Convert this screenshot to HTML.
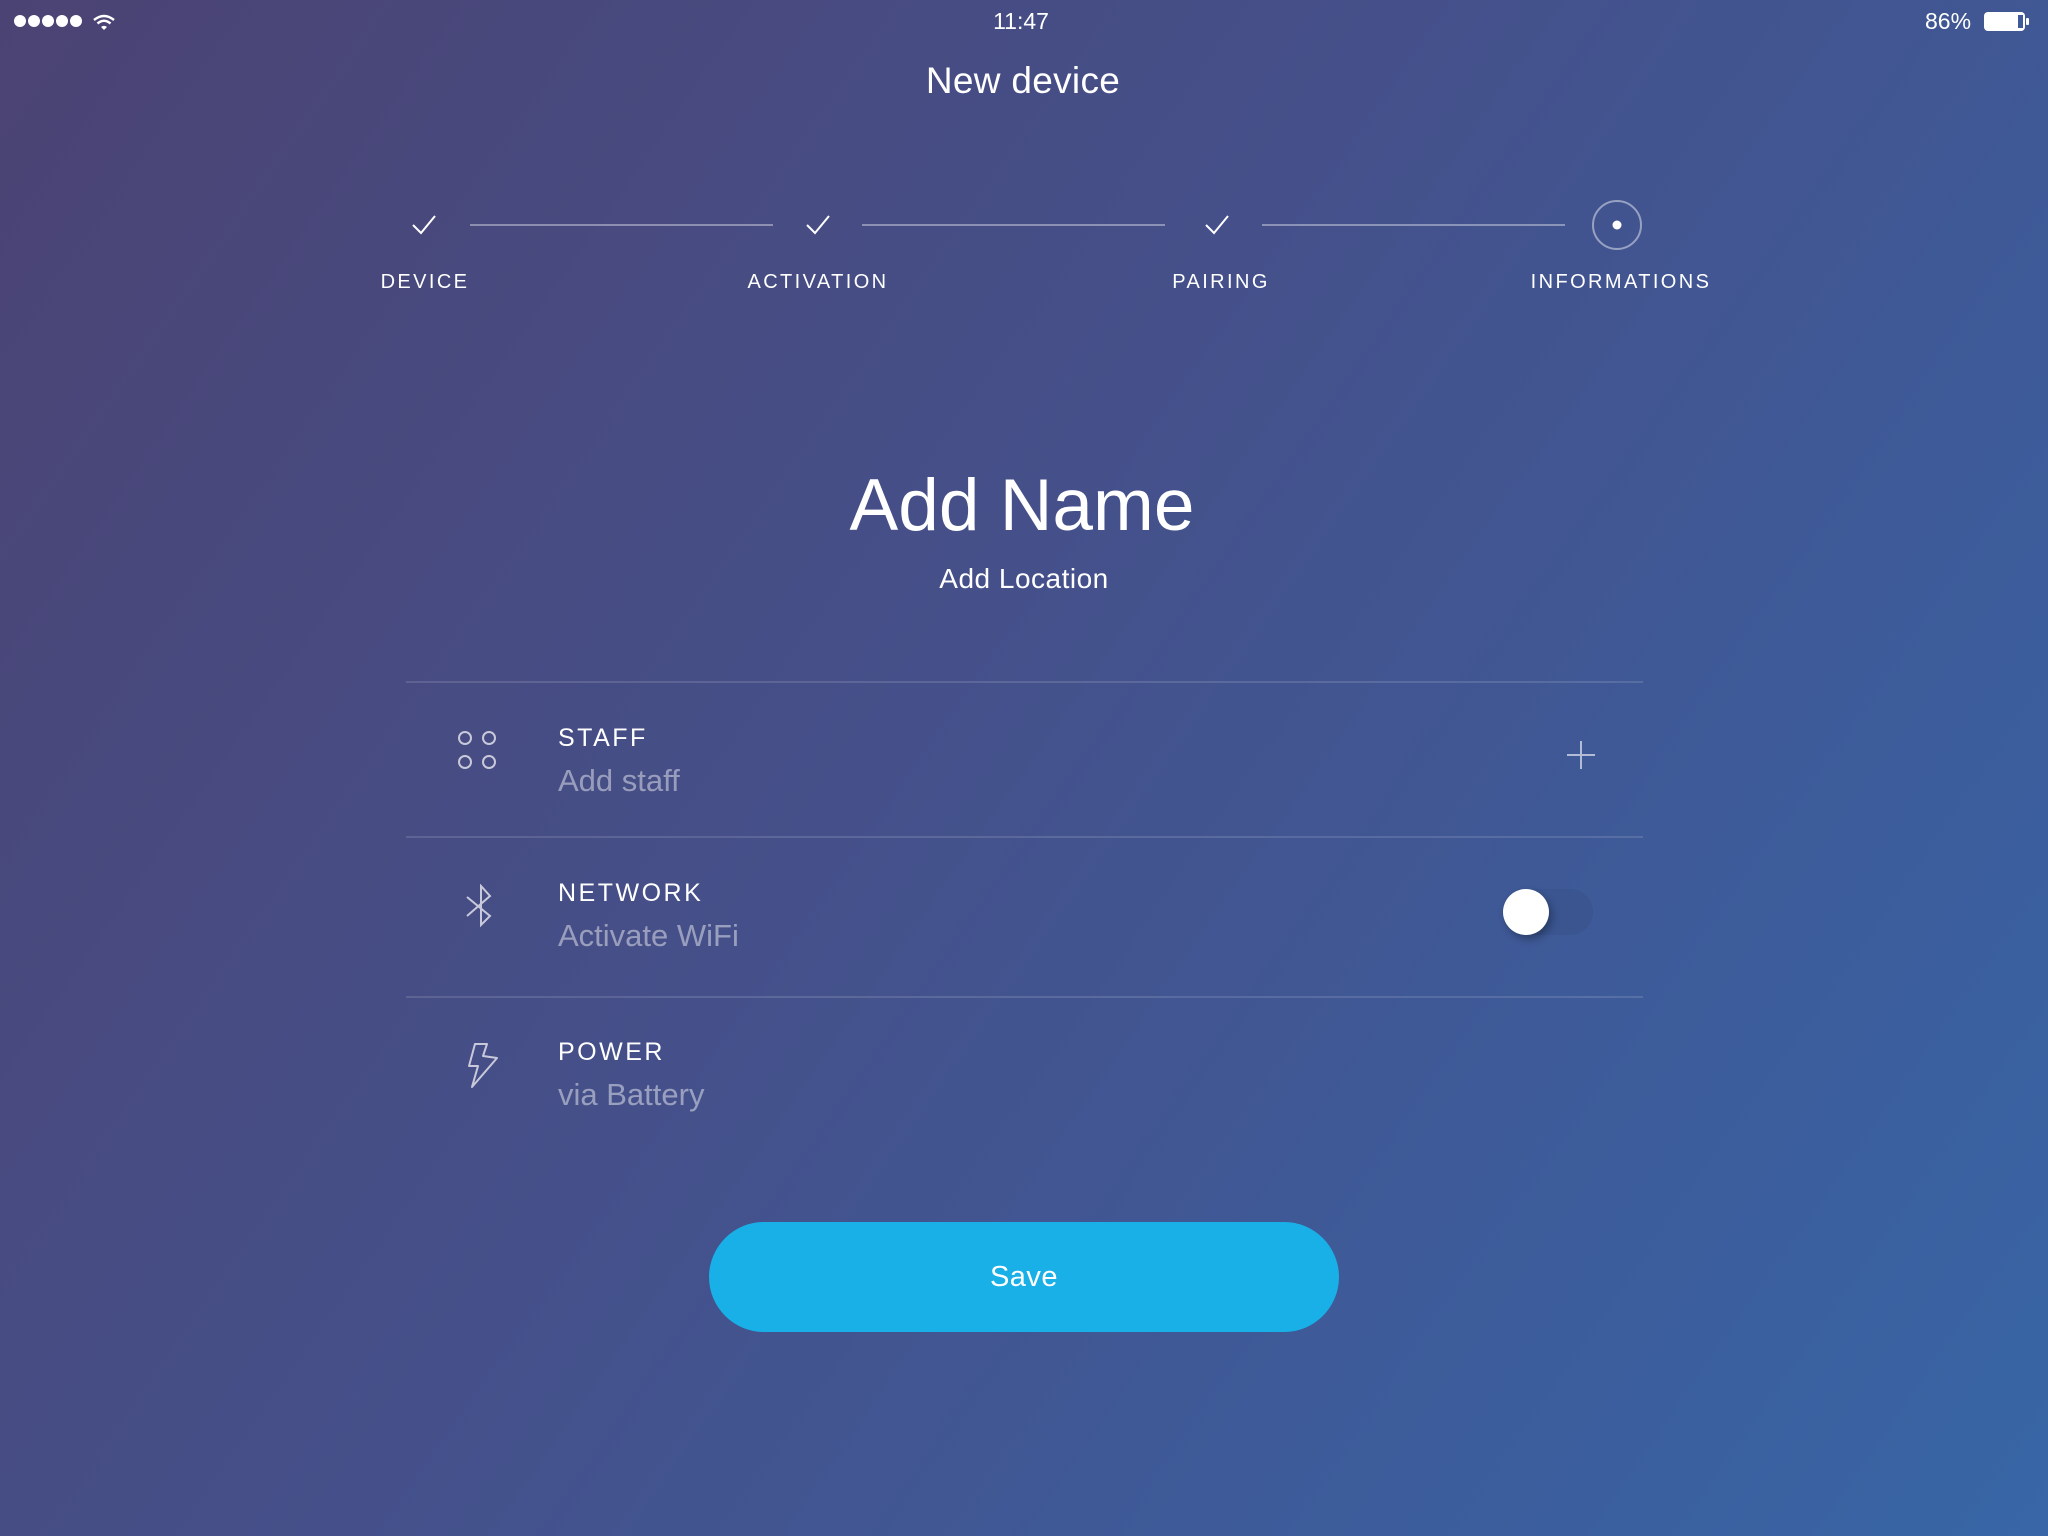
<!DOCTYPE html>
<html><head><meta charset="utf-8"><style>
*{margin:0;padding:0;box-sizing:border-box}
html,body{width:2048px;height:1536px;overflow:hidden}
body{position:relative;font-family:"Liberation Sans",sans-serif;color:#fff;
background:linear-gradient(125deg,#4b4373 0%,#45508a 45%,#3c5d9c 80%,#3866a6 100%)}
.a{position:absolute}
.c{position:absolute;transform:translateX(-50%);white-space:nowrap;text-align:center}
.lbl{font-size:20px;letter-spacing:2.4px;top:271px}
.line{position:absolute;height:2px;background:rgba(255,255,255,0.38);top:224px}
.div{position:absolute;left:406px;width:1237px;height:2px;background:rgba(255,255,255,0.13)}
.t{position:absolute;left:558px;font-size:25px;letter-spacing:2.5px}
.s{position:absolute;left:558px;font-size:31px;color:rgba(255,255,255,0.45)}
</style></head><body>
<svg class="a" style="left:14px;top:14px" width="110" height="16">
<circle cx="6" cy="7" r="6" fill="#fff"/><circle cx="20" cy="7" r="6" fill="#fff"/><circle cx="34" cy="7" r="6" fill="#fff"/><circle cx="48" cy="7" r="6" fill="#fff"/><circle cx="62" cy="7" r="6" fill="#fff"/>
<path d="M80 6 Q90 -2 100 6" stroke="#fff" stroke-width="2.5" fill="none"/>
<path d="M83.5 9.5 Q90 4 96.5 9.5" stroke="#fff" stroke-width="2.5" fill="none"/>
<path d="M87 13 L90 16 L93 13 Q90 10.5 87 13Z" fill="#fff"/>
</svg>
<div class="c" style="left:1021px;top:8px;font-size:23px">11:47</div>
<div class="a" style="left:1925px;top:8px;font-size:23px">86%</div>
<svg class="a" style="left:1983px;top:11px" width="50" height="22">
<rect x="1" y="1" width="41" height="19" rx="4" fill="#fff"/>
<rect x="35" y="4" width="5" height="13" fill="#3e5a98"/>
<rect x="43" y="7" width="3" height="7" rx="1" fill="#fff"/>
</svg>
<div class="c" style="left:1023px;top:60px;font-size:37px;letter-spacing:0.3px">New device</div>
<svg class="a" style="left:0;top:195px" width="2048" height="60">
<g stroke="#fff" stroke-width="2" fill="none">
<path d="M413 30 L421 38 L435 21"/><path d="M807 30 L815 38 L829 21"/><path d="M1206 30 L1214 38 L1228 21"/>
</g>
<circle cx="1617" cy="30" r="24" fill="none" stroke="rgba(255,255,255,0.45)" stroke-width="2"/>
<circle cx="1617" cy="30" r="4.5" fill="#fff"/>
</svg>
<div class="line" style="left:470px;width:303px"></div>
<div class="line" style="left:862px;width:303px"></div>
<div class="line" style="left:1262px;width:303px"></div>
<div class="c lbl" style="left:425px">DEVICE</div>
<div class="c lbl" style="left:818px">ACTIVATION</div>
<div class="c lbl" style="left:1221px">PAIRING</div>
<div class="c lbl" style="left:1621px">INFORMATIONS</div>
<div class="c" style="left:1022px;top:464px;font-size:73px">Add Name</div>
<div class="c" style="left:1024px;top:563px;font-size:28px;letter-spacing:0.5px">Add Location</div>
<div class="div" style="top:681px"></div>
<div class="div" style="top:836px"></div>
<div class="div" style="top:996px"></div>
<svg class="a" style="left:455px;top:728px" width="45" height="45" stroke="rgba(255,255,255,0.7)" stroke-width="2" fill="none">
<circle cx="10" cy="10" r="6"/><circle cx="34" cy="10" r="6"/><circle cx="10" cy="34" r="6"/><circle cx="34" cy="34" r="6"/>
</svg>
<svg class="a" style="left:462px;top:884px" width="40" height="46" stroke="rgba(255,255,255,0.7)" stroke-width="2" fill="none">
<path d="M5 13 L28 32 L19 41 L19 2 L28 12 L5 32"/>
</svg>
<svg class="a" style="left:465px;top:1042px" width="40" height="48" stroke="rgba(255,255,255,0.7)" stroke-width="2" fill="none" stroke-linejoin="round">
<path d="M10 2 L22 2 L18 14 L32 16 L7 45 L13 24 L4 24 Z"/>
</svg>
<div class="t" style="top:724px">STAFF</div>
<div class="s" style="top:763px">Add staff</div>
<div class="t" style="top:879px">NETWORK</div>
<div class="s" style="top:918px">Activate WiFi</div>
<div class="t" style="top:1038px">POWER</div>
<div class="s" style="top:1077px">via Battery</div>
<svg class="a" style="left:1566px;top:740px" width="30" height="30" stroke="rgba(255,255,255,0.6)" stroke-width="2">
<path d="M15 1 V29 M1 15 H29"/></svg>
<div class="a" style="left:1502px;top:889px;width:91px;height:46px;border-radius:23px;background:#3a5590"></div>
<div class="a" style="left:1503px;top:889px;width:46px;height:46px;border-radius:50%;background:#fff;box-shadow:3px 4px 8px rgba(0,0,0,0.3)"></div>
<div class="a" style="left:709px;top:1222px;width:630px;height:110px;border-radius:55px;background:#19b0e8"></div>
<div class="c" style="left:1024px;top:1261px;font-size:29px;letter-spacing:0.5px">Save</div>
</body></html>
